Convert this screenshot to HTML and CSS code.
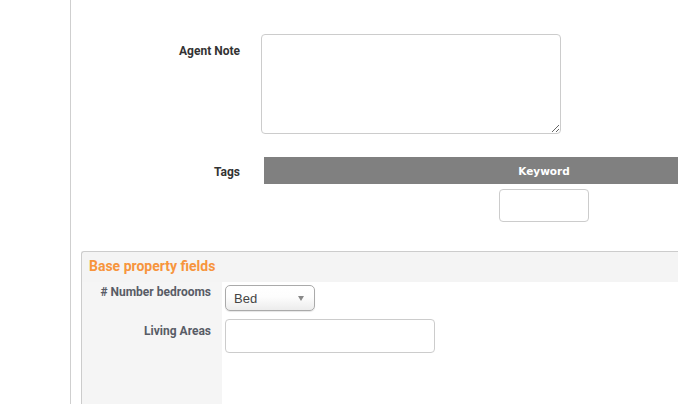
FILE: index.html
```html
<!DOCTYPE html>
<html>
<head>
	<title>Property Form</title>
	<link rel="stylesheet" href="styles.css">
</head>
<body>
	<div class="page">
		<div class="form-row">
			<label class="form-label note-label">Agent Note</label>
			<textarea class="note-input"></textarea>
		</div>

		<div class="form-row tags-row">
			<label class="form-label tags-label">Tags</label>
			<table class="tags-table">
				<thead>
					<tr><th>Keyword</th></tr>
				</thead>
				<tbody>
					<tr><td><input type="text" class="keyword-input"></td></tr>
				</tbody>
			</table>
		</div>

		<div class="fieldset">
			<div class="fieldset-title">Base property fields</div>
			<div class="fieldset-body">
				<div class="field-label bed-label"># Number bedrooms</div>
				<div class="field-cell">
					<div class="select-box">
						<span>Bed</span>
						<span class="select-arrow"></span>
					</div>
				</div>
				<div class="field-label living-label">Living Areas</div>
				<div class="field-cell living-cell">
					<input type="text" class="living-input">
				</div>
			</div>
		</div>
	</div>
</body>
</html>
```

FILE: styles.css
```css
body {
	margin: 0;
	overflow: hidden;
	background: #fff;
	font-family: Roboto, "Liberation Sans", sans-serif;
}

.page {
	margin-left: 70px;
	border-left: 1px solid #cfcfcf;
	height: 404px;
	padding-top: 34px;
	box-sizing: border-box;
	overflow: hidden;
}

.form-row {
	display: flex;
	align-items: flex-start;
}

.form-label {
	width: 169px;
	flex-shrink: 0;
	text-align: right;
	font-size: 12px;
	line-height: 14px;
	font-weight: bold;
	color: #333;
}

.note-label {
	padding-top: 10px;
}

.note-input {
	width: 300px;
	height: 100px;
	margin: 0 0 0 21px;
	box-sizing: border-box;
	border: 1px solid #ccc;
	border-radius: 4px;
	padding: 4px;
	font-family: inherit;
}

.tags-row {
	margin-top: 23px;
}

.tags-label {
	padding-top: 8px;
}

.tags-table {
	width: 560px;
	flex-shrink: 0;
	margin-left: 24px;
	border-collapse: collapse;
}

.tags-table th {
	height: 27px;
	padding: 0;
	background: #808080;
	color: #fff;
	font-family: "DejaVu Sans", sans-serif;
	font-size: 10.5px;
	font-weight: bold;
	text-align: center;
}

.tags-table td {
	padding: 5px 0 0;
	text-align: center;
}

.keyword-input {
	display: block;
	margin: 0 auto;
	width: 90px;
	height: 33px;
	box-sizing: border-box;
	border: 1px solid #ccc;
	border-radius: 4px;
}

.fieldset {
	margin: 29px 0 0 10px;
	width: 660px;
	border: 1px solid #ccc;
	border-right: none;
	border-bottom: none;
	border-radius: 3px 0 0 0;
	background: #f4f4f4;
}

.fieldset-title {
	height: 30px;
	box-sizing: border-box;
	padding: 6px 0 0 7px;
	font-size: 14px;
	line-height: 16px;
	font-weight: bold;
	color: #f7953d;
}

.fieldset-body {
	display: grid;
	grid-template-columns: 140px 1fr;
	min-height: 130px;
	align-content: start;
	background: linear-gradient(to right, #f5f5f5 140px, #fff 140px);
}

.field-label {
	padding-right: 11px;
	text-align: right;
	font-size: 12px;
	line-height: 14px;
	font-weight: bold;
	color: #585c66;
}

.field-cell {
	padding-left: 3px;
}

.bed-label,
.bed-label + .field-cell {
	padding-top: 3px;
}

.living-label {
	padding-top: 13px;
}

.living-cell {
	padding-top: 8px;
}

.select-box {
	width: 90px;
	height: 26px;
	box-sizing: border-box;
	display: flex;
	align-items: center;
	justify-content: space-between;
	padding: 0 10px 0 8px;
	border: 1px solid #aaa;
	border-radius: 5px;
	background: linear-gradient(#fff 0%, #fdfdfd 45%, #ececec 100%);
	box-shadow: 0 1px 1px rgba(0, 0, 0, 0.1);
	font-family: "Liberation Sans", sans-serif;
	font-size: 13px;
	color: #444;
}

.select-arrow {
	width: 0;
	height: 0;
	border-left: 3.5px solid transparent;
	border-right: 3.5px solid transparent;
	border-top: 5px solid #888;
	margin-top: 1px;
}

.living-input {
	display: block;
	width: 210px;
	height: 34px;
	box-sizing: border-box;
	border: 1px solid #ccc;
	border-radius: 4px;
}
```
